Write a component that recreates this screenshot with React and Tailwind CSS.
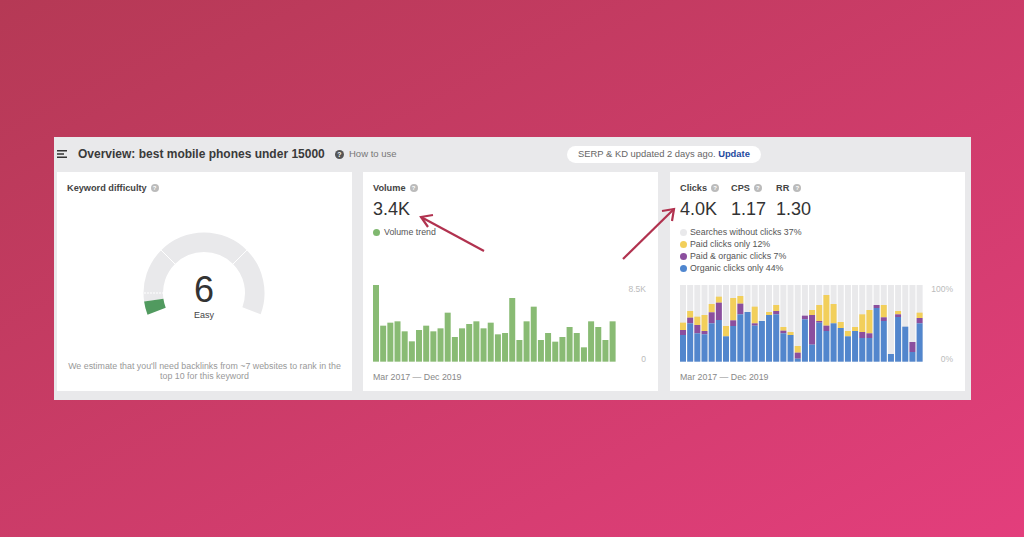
const volume = [45, 167, 158, 154, 184, 214, 180, 167, 184, 175, 128, 201, 175, 162, 154, 175, 158, 193, 189, 84, 210, 154, 110, 210, 189, 215, 201, 171, 189, 232, 154, 171, 210, 154];

// tops of blue, purple and yellow, read off the 3x crop (baseline 260, top 30)
const clicks = [
	[180, 165, 143], [145, 128, 108], [175, 150, 125], [178, 168, 120], [145, 112, 87], [135, 83, 65],
	[184, 184, 153], [153, 136, 69], [118, 86, 63], [111, 111, 111], [152, 145, 95], [138, 138, 138],
	[120, 120, 111], [118, 108, 90], [175, 167, 156], [180, 180, 171], [251, 233, 213], [133, 122, 122],
	[209, 120, 105], [143, 138, 90], [168, 152, 60], [145, 145, 87], [159, 159, 141], [184, 184, 168],
	[168, 168, 156], [189, 171, 118], [189, 175, 105], [99, 90, 90], [138, 127, 90], [237, 237, 237],
	[126, 118, 108], [155, 155, 155], [231, 201, 201], [145, 129, 113],
];

const legend = [
	["bg-[#e9e9eb]", "Searches without clicks 37%"],
	["bg-[#f2cf5b]", "Paid clicks only 12%"],
	["bg-[#8b4f9e]", "Paid & organic clicks 7%"],
	["bg-[#4f86cf]", "Organic clicks only 44%"],
];

function Help({ dark }) {
	return (
		<span className={`inline-flex shrink-0 rounded-full items-center justify-center text-white leading-none font-bold ${dark ? "w-[9px] h-[9px] text-[7px] bg-[#555]" : "w-2 h-2 text-[6px] bg-[#bbb]"}`}>
			?
		</span>
	);
}

function Label({ children }) {
	return (
		<div className="flex items-center gap-[4px] text-[9.2px] leading-3 font-bold text-[#444]">
			{children}
			<Help />
		</div>
	);
}

function Big({ children }) {
	return <div className="mt-[4px] text-[18px] leading-[22px] text-[#333]">{children}</div>;
}

function Axis({ top, bottom }) {
	return (
		<div className="flex-1 h-[80px] -mt-[1px] pr-[2px] flex flex-col justify-between items-end text-[8.5px] leading-[10px] text-[#bbb]">
			<span>{top}</span>
			<span>{bottom}</span>
		</div>
	);
}

function Gauge() {
	const c = 61;
	const pt = (r, deg) => {
		const a = (deg * Math.PI) / 180;
		return `${(c + r * Math.cos(a)).toFixed(2)} ${(c + r * Math.sin(a)).toFixed(2)}`;
	};
	const seg = (from, to) => `M${pt(60.5, from)} A60.5 60.5 0 0 1 ${pt(60.5, to)} L${pt(41, to)} A41 41 0 0 0 ${pt(41, from)} Z`;
	return (
		<svg width="122" height="90" viewBox="0 0 122 90" className="block">
			<path d={seg(172, 225)} fill="#e9e9eb" />
			<path d={seg(225, 315)} fill="#e9e9eb" />
			<path d={seg(315, 380.5)} fill="#e9e9eb" />
			<path d={`M${pt(40, 225)} L${pt(62, 225)} M${pt(40, 315)} L${pt(62, 315)}`} stroke="#fff" strokeWidth="1" />
			<path d={`M${pt(40, 180)} L${pt(62, 180)}`} stroke="#fff" strokeWidth="1" strokeDasharray="2 1" />
			<path d={seg(159, 172)} fill="#519a5f" />
		</svg>
	);
}

export default function App() {
	return (
		<div className="relative h-[537px] w-full overflow-hidden pt-[137px] pl-[54px] bg-gradient-to-br from-[#b53955] to-[#e33e7c] font-['Liberation_Sans',Arial,sans-serif]">
			<div className="w-[917px] h-[263px] bg-[#e9e9eb] px-[3px]">
				<div className="h-[35px] flex items-center">
					<svg width="10" height="8" viewBox="0 0 10 8" className="block mt-[-2px] shrink-0">
						<path d="M0 .75h10M0 4h7M0 7.25h10" stroke="#333" strokeWidth="1.3" />
					</svg>
					<h1 className="ml-[11px] mt-[-1px] text-[12px] font-bold text-[#3a3a3a] whitespace-nowrap w-[247px]">Overview: best mobile phones under 15000</h1>
					<div className="ml-[10px] flex items-center gap-[5px] text-[9.5px] text-[#777] w-[58px]">
						<Help dark />
						<span className="whitespace-nowrap">How to use</span>
					</div>
					<div className="ml-[174px] h-[17px] w-[194px] mt-[-1px] rounded-full bg-white flex items-center justify-center text-[9.4px] text-[#666] whitespace-nowrap">
						SERP &amp; KD updated 2 days ago.&nbsp;<span className="font-bold text-[#1f4a9e]">Update</span>
					</div>
				</div>

				<div className="flex gap-[11px]">
					<section className="w-[295px] h-[219px] bg-white pt-[10px] px-[10px] flex flex-col items-center">
						<div className="self-start">
							<Label>Keyword difficulty</Label>
						</div>
						<div className="relative mt-[38px] -ml-[1px]">
							<Gauge />
							<div className="absolute left-0 right-0 top-[37px] text-center text-[36px] leading-[42px] text-[#333]">6</div>
							<div className="absolute left-0 right-0 top-[77px] text-center text-[9px] leading-3 text-[#444]">Easy</div>
						</div>
						<p className="mt-[39px] w-[280px] text-center text-[8.85px] leading-[10px] text-[#999]">
							We estimate that you'll need backlinks from ~7 websites to rank in the top 10 for this keyword
						</p>
					</section>

					<section className="w-[295px] h-[219px] bg-white pt-[10px] px-[10px]">
						<Label>Volume</Label>
						<Big>3.4K</Big>
						<div className="mt-[6px] flex items-center gap-[4px] text-[8.8px] leading-3 text-[#555]">
							<span className="w-[7px] h-[7px] rounded-full bg-[#7fb86f]" />
							Volume trend
						</div>
						<div className="mt-[47px] flex">
							<svg width="246" height="77" viewBox="0 0 246 77" className="block">
								{volume.map((top, i) => (
									<rect key={i} x={i * 7.17} y={(top - 45) / 3} width="6" height={(275 - top) / 3} fill="#89bb74" />
								))}
							</svg>
							<Axis top="8.5K" bottom="0" />
						</div>
						<div className="mt-[7px] text-[8.8px] leading-3 text-[#888]">Mar 2017 — Dec 2019</div>
					</section>

					<section className="ml-px w-[295px] h-[219px] bg-white pt-[10px] px-[10px]">
						<div className="flex">
							<div className="w-[51px]">
								<Label>Clicks</Label>
								<Big>4.0K</Big>
							</div>
							<div className="w-[45px]">
								<Label>CPS</Label>
								<Big>1.17</Big>
							</div>
							<div>
								<Label>RR</Label>
								<Big>1.30</Big>
							</div>
						</div>
						<div className="mt-[6px] flex flex-col">
							{legend.map(([dot, text]) => (
								<div key={text} className="flex items-center gap-[3px] text-[8.8px] leading-3 text-[#555]">
									<span className={`w-[7px] h-[7px] rounded-full ${dot}`} />
									{text}
								</div>
							))}
						</div>
						<div className="mt-[11px] flex">
							<svg width="246" height="77" viewBox="0 0 246 77" className="block">
								{clicks.map(([blue, purple, yellow], i) => {
									const x = i * 7.17;
									return (
										<g key={i}>
											<rect x={x} width="6" height="76.7" fill="#e9e9eb" />
											<rect x={x} y={(yellow - 30) / 3} width="6" height={(purple - yellow) / 3} fill="#f2cf5b" />
											<rect x={x} y={(purple - 30) / 3} width="6" height={(blue - purple) / 3} fill="#8b4f9e" />
											<rect x={x} y={(blue - 30) / 3} width="6" height={(260 - blue) / 3} fill="#5286cd" />
										</g>
									);
								})}
							</svg>
							<Axis top="100%" bottom="0%" />
						</div>
						<div className="mt-[7px] text-[8.8px] leading-3 text-[#888]">Mar 2017 — Dec 2019</div>
					</section>
				</div>
			</div>

			{/* annotation arrows drawn over the screenshot */}
			<svg className="absolute left-0 top-0 pointer-events-none" width="1024" height="537" viewBox="0 0 1024 537">
				<g fill="none" stroke="#b1324f" strokeWidth="2.2">
					<path d="M484 251 L421 217" />
					<path d="M433 215 L421 217 L428 227" />
					<path d="M623 259 L674 209" />
					<path d="M662 211 L674 209 L672 221" />
				</g>
			</svg>
		</div>
	);
}
